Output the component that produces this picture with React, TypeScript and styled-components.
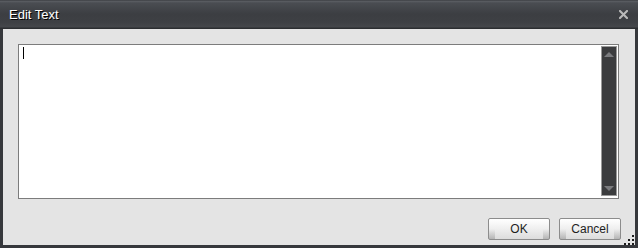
import React from "react";
import styled, { createGlobalStyle } from "styled-components";

const Global = createGlobalStyle`
  html, body { margin: 0; padding: 0; background: #e4e4e4; }
  #root { width: 638px; height: 248px; }
`;

const Window = styled.div`
  box-sizing: border-box;
  width: 638px;
  height: 248px;
  display: flex;
  flex-direction: column;
  background: #e4e4e4;
  border: 3px solid #36383c;
  border-top: none;
  position: relative;
  font-family: "Liberation Sans", Arial, sans-serif;
`;

const TitleBar = styled.div`
  box-sizing: border-box;
  height: 29px;
  margin: 0 -3px;
  display: flex;
  align-items: center;
  justify-content: space-between;
  padding: 0 10px 1px 9px;
  background: linear-gradient(
    to bottom,
    #2f3135 0px,
    #5d6065 1px,
    #4a4d52 3px,
    #3c3e42 14px,
    #3e4044 22px,
    #45474b 27px,
    #2c2e31 28px
  );
`;

const Title = styled.span`
  color: #ffffff;
  font-size: 13px;
  text-shadow: 1px 1px 0 #000;
`;

const CloseButton = styled.button`
  border: none;
  background: none;
  padding: 0;
  width: 9px;
  height: 9px;
  display: flex;
  cursor: pointer;
  margin-top: 1px;
`;

const Body = styled.div`
  flex: 1;
  display: flex;
  flex-direction: column;
  padding: 15px 16px 5px 15px;
`;

const Editor = styled.div`
  box-sizing: border-box;
  height: 155px;
  background: #ffffff;
  border: 1px solid #7c7c7c;
  display: flex;
  padding: 1px 1px 2px 4px;
`;

const TextArea = styled.div`
  flex: 1;
  padding-top: 1px;
`;

const Caret = styled.span`
  display: block;
  width: 1px;
  height: 12px;
  background: #000;
`;

const ScrollTrack = styled.div`
  box-sizing: border-box;
  width: 16px;
  border: 1px solid #9a9a9a;
  background: #3b3c3e;
  display: flex;
  flex-direction: column;
  justify-content: space-between;
  align-items: center;
  padding: 5px 0 4px;
`;

const Arrow = styled.span<{ $down?: boolean }>`
  width: 0;
  height: 0;
  border-left: 5px solid transparent;
  border-right: 5px solid transparent;
  ${(p) =>
    p.$down
      ? "border-top: 5px solid #7a7b7e;"
      : "border-bottom: 5px solid #7a7b7e;"}
`;

const Footer = styled.div`
  margin-top: auto;
  display: flex;
  justify-content: flex-end;
  gap: 9px;
  margin-right: -2px;
`;

const Button = styled.button`
  position: relative;
  box-sizing: border-box;
  width: 62px;
  height: 22px;
  border: 1px solid #8c8c8c;
  border-radius: 2px;
  background: linear-gradient(to bottom, #ffffff 0%, #f2f2f2 40%, #dcdcdc 100%);
  font-family: "Liberation Sans Narrow", "Liberation Sans", Arial, sans-serif;
  font-size: 12px;
  color: #1e1e1e;
  padding: 0;
  cursor: pointer;
  overflow: hidden;
  &::before,
  &::after {
    content: "";
    position: absolute;
    bottom: 0;
    width: 6px;
    height: 10px;
    background: linear-gradient(to bottom, rgba(0, 0, 0, 0), rgba(0, 0, 0, 0.18));
  }
  &::before { left: 0; }
  &::after { right: 0; }
`;

const Grip = styled.div`
  position: absolute;
  right: 1px;
  bottom: 0px;
  width: 10px;
  height: 10px;
  display: grid;
  grid-template-columns: repeat(3, 2px);
  grid-template-rows: repeat(3, 2px);
  gap: 2px;
`;

const Dot = styled.span<{ $on: boolean }>`
  background: ${(p) => (p.$on ? "#1c1c1c" : "transparent")};
`;

const gripPattern = [0, 0, 1, 0, 1, 1, 1, 1, 1];

export default function App() {
  return (
    <>
      <Global />
      <Window>
        <TitleBar>
          <Title>Edit Text</Title>
          <CloseButton aria-label="Close">
            <svg width="9" height="9" viewBox="0 0 9 9">
              <path
                d="M1 1 L8 8 M8 1 L1 8"
                stroke="#b9b9b9"
                strokeWidth="2.1"
                strokeLinecap="square"
              />
            </svg>
          </CloseButton>
        </TitleBar>
        <Body>
          <Editor>
            <TextArea>
              <Caret />
            </TextArea>
            <ScrollTrack>
              <Arrow />
              <Arrow $down />
            </ScrollTrack>
          </Editor>
          <Footer>
            <Button>OK</Button>
            <Button>Cancel</Button>
          </Footer>
        </Body>
        <Grip>
          {gripPattern.map((on, i) => (
            <Dot key={i} $on={!!on} />
          ))}
        </Grip>
      </Window>
    </>
  );
}
